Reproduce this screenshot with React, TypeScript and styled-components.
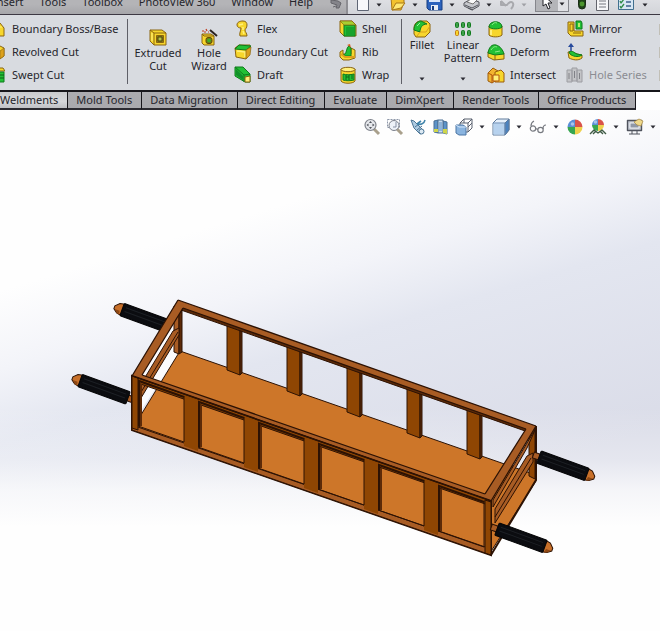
import React from "react";
import styled, { createGlobalStyle, css } from "styled-components";

const GlobalStyle = createGlobalStyle`
  * { box-sizing: border-box; }
  html, body { margin: 0; padding: 0; overflow: hidden; }
  body, button { font-family: "Noto Sans", "Open Sans", sans-serif; font-size: 11px; color: #26262c; }
`;

const Page = styled.div`
  display: flex;
  flex-direction: column;
  min-height: 100vh;
  overflow: hidden;
  background: #fff;
`;

const PlainButton = styled.button`
  display: flex;
  align-items: center;
  flex: none;
  margin: 0;
  padding: 0;
  border: 0;
  background: none;
  line-height: 16px;
  white-space: nowrap;
  cursor: default;
`;

const TopBar = styled.header`
  display: flex;
  align-items: flex-end;
  height: 15px;
  overflow: hidden;
  border-bottom: 1px solid #3c3843;
  background: #d9dbe0;
`;

const MenuBar = styled.nav`
  display: flex;
  flex: none;
  align-items: flex-end;
  gap: 16px;
  height: 24px;
  margin-left: -7px;
  padding: 0 3px 4px 0;
  background: linear-gradient(to bottom, #b4b4b7 60%, #a6a6aa);
  border-right: 2px solid #8e8e93;
`;

const QuickBar = styled.div`
  display: flex;
  flex: 1;
  align-items: flex-end;
  height: 24px;
  padding: 0 8px 2px 8px;
  gap: 8px;
  background: linear-gradient(to bottom, #e6e7ea, #d2d4d9);
`;

const QuickGroup = styled(PlainButton)<{ $active?: boolean; $wide?: boolean }>`
  gap: ${(p) => (p.$wide ? 7 : 6)}px;
  align-items: flex-end;
  ${(p) =>
    p.$active &&
    css`
      background: linear-gradient(to right, #b4b5b9 22px, #e0e1e5 22px);
      border: 1px solid #85868c;
      padding: 0 3px 0 4px;
      gap: 5px;
    `}
`;

const Ribbon = styled.section`
  display: flex;
  height: 77px;
  overflow: hidden;
  border-bottom: 2px solid #17161b;
  background: #d8dbe0;
`;

const RibbonColumn = styled.div<{ $width: number }>`
  display: flex;
  flex: none;
  flex-direction: column;
  gap: 5px;
  width: ${(p) => p.$width}px;
  padding-top: 5px;
`;

const Command = styled(PlainButton)<{ $gap?: number; $disabled?: boolean }>`
  gap: ${(p) => p.$gap ?? 5}px;
  height: 18px;
  color: ${(p) => (p.$disabled ? "#8b8c92" : "#26262c")};
`;

const BigCommand = styled(PlainButton)<{ $width: number; $low?: boolean }>`
  flex-direction: column;
  align-self: flex-start;
  width: ${(p) => p.$width}px;
  height: 72px;
  padding-top: ${(p) => (p.$low ? 13 : 5)}px;
  line-height: 13px;
  text-align: center;
`;

const BigLabel = styled.span`
  white-space: pre-line;
`;

const Push = styled.span`
  display: flex;
  margin-top: auto;
  padding-bottom: 6px;
`;

const Divider = styled.div<{ $after: number }>`
  flex: none;
  width: 1px;
  height: 65px;
  margin: 4px ${(p) => p.$after}px 0 0;
  background: #5f6068;
`;

const Tabs = styled.div`
  display: flex;
  height: 18px;
  overflow: hidden;
`;

const Tab = styled(PlainButton)<{ $active?: boolean }>`
  padding: 0 9px 1px 8px;
  border-right: 1px solid #17161b;
  border-bottom: 2px solid #2b2a30;
  background: ${(p) =>
    p.$active ? "linear-gradient(to bottom, #c9cacd, #d6d7da 60%, #bfc0c4)" : "linear-gradient(to bottom, #acacb0, #a9a9ad)"};
  ${(p) => p.$active && "padding-left: 0;"}
`;

const Viewport = styled.main`
  flex: 1;
  background: linear-gradient(
      to bottom,
      rgba(255, 255, 255, 0) 57%,
      rgba(254, 254, 254, 0.3) 67%,
      rgba(254, 254, 254, 0.75) 73%,
      #fefefe 80%
    ),
    linear-gradient(163deg, #fefefe 25%, #f3f4f9 36%, #e3e6f0 46%, #dadce8 72%);
`;

const ViewTools = styled.div`
  display: flex;
  justify-content: flex-end;
  align-items: center;
  height: 34px;
  padding-right: 4px;
`;

const ViewTool = styled(PlainButton)<{ $after: number }>`
  gap: 6px;
  margin-right: ${(p) => p.$after}px;
`;

const Drawing = styled.svg`
  display: block;
  width: 100%;
  height: auto;
`;

const IconSvg = styled.svg`
  display: block;
  flex: none;
`;

/* ---------- icons ---------- */

const Y = "#f7d62c";
const YD = "#dca11c";
const YL = "#fff07c";
const G = "#22c035";
const GD = "#0f7a1c";
const BR = "#8a6410";

type Draw = { children: React.ReactNode; w?: number; h?: number };
const Icon = ({ children, w = 18, h = 18 }: Draw) => (
  <IconSvg width={w} height={h} viewBox={`0 0 ${w} ${h}`} strokeLinejoin="round" aria-hidden="true">
    {children}
  </IconSvg>
);

const Caret = ({ color = "#2c2c34" }: { color?: string }) => (
  <Icon w={6} h={4}>
    <path d="M0.5 0.5h5L3 3.5z" fill={color} />
  </Icon>
);

const QuickCaret = ({ color }: { color?: string }) => (
  <Icon w={6} h={12}>
    <path d="M0.5 3.5h5L3 6.5z" fill={color ?? "#25252b"} />
  </Icon>
);

const BoundaryBossIcon = () => (
  <Icon w={5}>
    <path d="M-6 6L0 3l4 5v8h-10z" fill={Y} stroke={BR} />
    <path d="M-4 7h6" stroke={YL} />
  </Icon>
);
const RevolvedCutIcon = () => (
  <Icon w={5}>
    <path d="M-6 5L0 3l4 2v8l-6 4z" fill={Y} stroke={BR} />
    <path d="M0 8l4-3v8l-4 3z" fill={YD} stroke={BR} strokeWidth=".6" />
  </Icon>
);
const SweptCutIcon = () => (
  <Icon w={5}>
    <path d="M-3 2h6l2 3h-8z" fill={Y} stroke={BR} />
    <path d="M-3 6h7v10h-7z" fill={G} stroke={GD} />
    <path d="M-2 9h6M-2 12h6" stroke="#0a6315" />
  </Icon>
);
const ExtrudedCutIcon = () => (
  <Icon>
    <path d="M1 2h12l4 3v12H5l-4-4z" fill={Y} stroke={BR} />
    <path d="M1 2l4 3h12M5 5v12" fill="none" stroke={BR} />
    <path d="M3 5v8" fill="none" stroke={YL} />
    <rect x="7.500" y="7.500" width="7" height="7" fill="#8a7a14" stroke={BR} />
    <path d="M9 9h4v4H9z" fill="#b7c046" stroke="#4c450c" />
  </Icon>
);
const HoleWizardIcon = () => (
  <Icon>
    <path d="M2 6h9l3 2v9H4l-2-2z" fill={Y} stroke={BR} />
    <path d="M2 6l2 2h10" fill="none" stroke={BR} />
    <rect x="6" y="9.500" width="6" height="6" rx="2" fill="#6f7b15" stroke="#5e4b0a" />
    <circle cx="9" cy="12.500" r="1.800" fill="#3fae2b" />
    <path d="M10 2l7 6" stroke="#2b2320" strokeWidth="2" />
    <path d="M2 3h2M6 1l1 2M4 4h2M8 4h1" stroke="#bf3a1d" strokeWidth="1.200" />
  </Icon>
);
const FlexIcon = () => (
  <Icon>
    <path d="M3 5c0-3 3-4 6-4 3 0 4 2 4 4 0 3-2 4-2 5 0 2 2 3 2 6H6c-1-3 1-5 1-8-2 0-4-1-4-3z" fill={Y} stroke={BR} />
    <path d="M5 5l4-1M9 7v3M9 11l1 3" stroke={YL} strokeWidth="1.500" fill="none" />
  </Icon>
);
const BoundaryCutIcon = () => (
  <Icon>
    <path d="M1 5l4-3h11l-1 9-3 5-10-2z" fill={Y} stroke={BR} />
    <path d="M1 6l4-4 12 1-5 4z" fill={G} stroke={GD} />
    <path d="M3 8l8 1v5" fill="none" stroke={YL} strokeWidth="1.500" />
    <path d="M12 7l5-3-1 8-4 4z" fill={YD} stroke={BR} strokeWidth=".7" />
  </Icon>
);
const DraftIcon = () => (
  <Icon>
    <path d="M1 1h8l7 7v8h-5L1 10z" fill={G} stroke={GD} />
    <path d="M1 1l9 8v7M10 9l6-1" fill="none" stroke={GD} />
    <path d="M2 3l7 7v4L2 9z" fill="#12902a" />
    <path d="M11 11l5-1v6h-5z" fill={YL} stroke={BR} />
  </Icon>
);
const ShellIcon = () => (
  <Icon>
    <path d="M1 1h12l4 4v11H5l-4-4z" fill={Y} stroke={BR} />
    <path d="M5 5h11v11H5z" fill={G} stroke={GD} />
    <path d="M7 7h8v8H7z" fill="#18a32c" />
    <path d="M1 1h12l4 4H5z" fill="#a8cf30" stroke={BR} strokeWidth=".7" />
  </Icon>
);
const RibIcon = () => (
  <Icon>
    <path d="M1 9l3-2v4h8V5l4 2v8l-6 2H4l-3-3z" fill={Y} stroke={BR} />
    <path d="M4 12c4 0 3-8 6-9l2 2v8H6z" fill={G} stroke={GD} />
    <path d="M10 3l-2-1 3-1 1 4" fill="#d65a1d" />
    <path d="M2 11l4 3h10" fill="none" stroke={YD} strokeWidth="2" />
  </Icon>
);
const WrapIcon = () => (
  <Icon>
    <path d="M2 3v12c2 3 12 3 14 0V3z" fill={Y} stroke={BR} />
    <ellipse cx="9" cy="3.500" rx="7" ry="2.200" fill={YL} stroke={BR} />
    <path d="M4 8c3 1 7 1 11 0v6c-4 1-8 1-11 0z" fill={G} stroke={GD} />
    <path d="M7 9v5M10 9v5M13 9v4M7 11h3" stroke="#0c6918" />
  </Icon>
);
const FilletIcon = () => (
  <Icon>
    <path d="M1 8c0-4 3-7 7-7h6l3 3v8l-5 5H3l-2-3z" fill={Y} stroke={BR} />
    <path d="M1 10c0-5 3-9 7-9l6 3c-5 0-7 4-7 8z" fill={G} stroke={GD} />
    <path d="M7 12l-3 4M7 12h6l4-6" fill="none" stroke={YD} />
    <path d="M4 6l3-3" stroke="#9df09c" />
  </Icon>
);
const PatternIcon = () => (
  <Icon>
    {[1, 7, 13].map((x) => (
      <g key={x}>
        <rect x={x + 0.5} y="2.500" width="3" height="5" rx="1" fill="#3fa04a" stroke={GD} />
        <rect
          x={x + 0.5}
          y="10.500"
          width="3"
          height="5"
          rx="1"
          fill={x === 1 ? Y : "#3fa04a"}
          stroke={x === 1 ? "#c27a12" : GD}
        />
      </g>
    ))}
  </Icon>
);
const DomeIcon = () => (
  <Icon>
    <path d="M2 6v9c2 2.500 11 2.500 13 0V6z" fill={Y} stroke={BR} />
    <path d="M2 7c0-7 13-7 13 0-2 2.500-11 2.500-13 0z" fill={G} stroke={GD} />
    <path d="M5 5c1-2 3-3 5-2" stroke="#8df08b" fill="none" />
    <path d="M4 10v5" stroke={YL} strokeWidth="2" />
  </Icon>
);
const DeformIcon = () => (
  <Icon>
    <path d="M1 9l4-5 9 2 3 5v5l-10 1-6-3z" fill={Y} stroke={BR} />
    <path d="M1 10c1-6 4-9 8-8s7 5 8 9l-9 1z" fill={G} stroke={GD} />
    <path d="M4 7c2-3 4-4 6-3M8 9l5-1" fill="none" stroke="#8be987" />
    <path d="M8 12v5" stroke={BR} />
  </Icon>
);
const IntersectIcon = () => (
  <Icon>
    <path d="M1 7l5-5 5 3v8l-6 4-4-2z" fill="#f2b431" stroke="#9a5c0d" />
    <path d="M8 6l6-2 3 3v9H8z" fill={Y} stroke="#9a5c0d" />
    <path d="M6 9h6v6H6z" fill={YL} stroke="#b3550e" />
    <path d="M1 7l4 2v8" fill="none" stroke="#b3550e" />
  </Icon>
);
const MirrorIcon = () => (
  <Icon>
    <path d="M2 2h6v9h9v5H5l-3-3z" fill={Y} stroke={BR} />
    <path d="M10 1h5l1 2v6h-6z" fill={G} stroke={GD} />
    <path d="M4 4h3v7H4zM7 13h8" fill="none" stroke={BR} />
    <path d="M12 3h2v4h-2z" fill="#b4e96a" />
  </Icon>
);
const FreeformIcon = () => (
  <Icon>
    <path d="M2 9c4-1 6 1 9 2l5 1v3c-4 3-9 2-13 0z" fill={Y} stroke={BR} />
    <path d="M3 9c4-2 5 1 8 2l5 1c-4 3-10 1-12-1z" fill={G} stroke={GD} />
    <path d="M5 8V3" stroke="#274a9c" strokeWidth="1.500" />
    <path d="M2 4l3-4 3 4z" fill="#274a9c" />
  </Icon>
);
const HoleSeriesIcon = () => (
  <Icon>
    <g fill="#c3c4c7" stroke="#9c9da2">
      <path d="M1 4h5v12H1zM6 2h5v13H6zM11 4h5v12h-5z" />
      <path d="M3 7v6M8.500 5v7M13.500 7v6" fill="none" stroke="#808187" />
    </g>
  </Icon>
);
const CutOffIcon = ({ tone }: { tone: string }) => (
  <Icon w={4}>
    <path d="M2 4h6v11H2z" fill={tone} stroke="#aaa38d" />
  </Icon>
);

const PinIcon = () => (
  <Icon w={14} h={12}>
    <path d="M2 2l7 1 3 2-2 5-3 0 1-3-6-2z" fill="#84848a" stroke="#65656b" />
    <path d="M4 9l3-1" stroke="#65656b" />
  </Icon>
);
const NewIcon = () => (
  <Icon w={14} h={12}>
    <path d="M1.500-3h11v13.500h-11z" fill="#f7f8fb" stroke="#5f6675" />
  </Icon>
);
const OpenIcon = () => (
  <Icon w={16} h={12}>
    <path d="M1-3h7l6 3v3l-3 7H2z" fill="#f3c22e" stroke="#a9791a" />
    <path d="M2 10l4-7h9l-4 5z" fill="#ffe873" stroke="#a9791a" />
  </Icon>
);
const SaveIcon = () => (
  <Icon w={17} h={12}>
    <path d="M1-4h15v14H3l-2-2z" fill="#2c63bd" stroke="#173e82" />
    <path d="M3-3h11v5H3z" fill="#d9e6fa" />
    <path d="M5 5h7v5H5z" fill="#e9edf3" />
    <path d="M6 6h2v4H6z" fill="#173e82" />
  </Icon>
);
const PrintIcon = () => (
  <Icon w={17} h={12}>
    <path d="M1 3l7-4 8 3v4l-7 4-8-4z" fill="#c6c8cd" stroke="#54565d" />
    <path d="M4 2l5-4 5 2-4 4z" fill="#fafafa" stroke="#777" />
    <path d="M2 5l7 3 6-3M5 8l5 2" fill="none" stroke="#54565d" />
  </Icon>
);
const UndoIcon = () => (
  <Icon w={15} h={12}>
    <path d="M1 1l5 5M1 1v4h6C11-1 16 3 11 9" fill="none" stroke="#a8a9ad" strokeWidth="2" />
  </Icon>
);
const CursorIcon = () => (
  <Icon w={14} h={12}>
    <path d="M3-4v11l3-2 2 5 2-1-2-5h4z" fill="#fff" stroke="#232329" />
  </Icon>
);
const LightIcon = () => (
  <Icon w={10} h={12}>
    <rect x="1.500" y="-6" width="7" height="15" rx="3.500" fill="#1f4418" stroke="#1a2c16" />
    <circle cx="5" cy="4" r="2.400" fill="#4c962e" />
  </Icon>
);
const PageIcon = () => (
  <Icon w={15} h={12}>
    <path d="M1.500-3h12v13.500h-12z" fill="#f6f6f8" stroke="#62646c" />
    <path d="M4 1h7M4 4h7M4 7h7" stroke="#74767e" />
  </Icon>
);
const OptionsIcon = () => (
  <Icon w={17} h={12}>
    <path d="M.5-3h15v12.500H.5z" fill="#d6e6f3" stroke="#41708f" />
    <path d="M2 1l1 2 3-4M2 6l1 2 3-4" fill="none" stroke="#2f8d4b" strokeWidth="1.300" />
    <path d="M8 2h5M8 6h5" stroke="#3c638f" strokeWidth="1.500" />
  </Icon>
);

const ZoomFitIcon = () => (
  <Icon>
    <path d="M11 11l5 5" stroke="#a9a08c" strokeWidth="3" />
    <circle cx="7.500" cy="7" r="5.500" fill="#e6e8ec" stroke="#7f838b" strokeWidth="1.200" />
    <path d="M7.500 3l1.500 2h-3zM7.500 11l1.500-2h-3zM3.500 7l2-1.500v3zM11.500 7l-2-1.500v3z" fill="#4f535b" />
  </Icon>
);
const ZoomAreaIcon = () => (
  <Icon>
    <path d="M11 11l5 5" stroke="#a9a08c" strokeWidth="3" />
    <path d="M1.500 1.500h12v8h-12z" fill="none" stroke="#8d97a8" strokeDasharray="2 1" />
    <circle cx="8" cy="7.500" r="5" fill="#eef2f8" stroke="#7b808b" />
    <path d="M10 4v5H7" fill="none" stroke="#8892a6" />
  </Icon>
);
const PreviousViewIcon = () => (
  <Icon>
    <path d="M2 2l3 1 9 9 0 3-3 1-6-6z" fill="#aecbe2" stroke="#4b7595" />
    <path d="M6 9l4-3M8 12l5-4" stroke="#4b7595" />
    <path d="M16 2c-1 4-4 5-8 4M8 6l4-3" fill="none" stroke="#3f83aa" strokeWidth="1.600" />
    <circle cx="12.500" cy="13.500" r="2.500" fill="#dce9f3" stroke="#4b7595" />
  </Icon>
);
const SectionIcon = () => (
  <Icon>
    <path d="M2 3l4-1v13l-4-1zM11 3l4 1v12l-4-1z" fill="#5c93c8" stroke="#4a6f94" />
    <path d="M6 2h5v13H6z" fill="#c9dced" stroke="#4a6f94" />
    <path d="M2 11h4v3l-4 0zM11 11h4v5l-4-1z" fill="#cfd649" />
    <path d="M7 4h3v9H7z" fill="#8eb4da" />
  </Icon>
);
const OrientationIcon = () => (
  <Icon>
    <path d="M5 5l4-4h8v9l-4 4H5z" fill="#fff" stroke="#59606e" />
    <path d="M5 5h8v9M13 5l4-4M9 1v4M13 9l4-4" fill="none" stroke="#59606e" />
    <path d="M1 7h7l3 2v8H4l-3-2z" fill="#8ab4df" stroke="#4c76a5" />
    <path d="M1 7l3 2h7" fill="none" stroke="#d6e8fa" />
  </Icon>
);
const DisplayStyleIcon = () => (
  <Icon>
    <path d="M1 5l4-4h12v11l-4 5H1z" fill="#e6f0fb" stroke="#5e7a9b" />
    <path d="M1.500 5.500h11v11h-11z" fill="#b7d2ee" />
    <path d="M13 5l4-4v11l-4 5z" fill="#4a82c0" stroke="#5e7a9b" />
    <path d="M1 5h12v12" fill="none" stroke="#6689b2" />
  </Icon>
);
const GlassesIcon = () => (
  <Icon>
    <g fill="none" stroke="#777a80" strokeWidth="1.200">
      <circle cx="4" cy="10.500" r="2.700" />
      <circle cx="11.500" cy="12" r="2.700" />
      <path d="M6.500 10.500l2.500 1M2 8c0-3 1-4 3-5M14 11c0-3 1-4 3-4" />
    </g>
  </Icon>
);
const Ball = ({ r = 7.5, cy = 9 }: { r?: number; cy?: number }) => (
  <>
    <path d={`M9 ${cy}V${cy - r}A${r} ${r} 0 0 0 ${9 - r} ${cy}z`} fill="#5b8fd6" />
    <path d={`M9 ${cy}V${cy - r}A${r} ${r} 0 0 1 ${9 + r} ${cy}z`} fill="#d9534a" />
    <path d={`M9 ${cy}H${9 - r}A${r} ${r} 0 0 0 9 ${cy + r}z`} fill="#37a650" />
    <path d={`M9 ${cy}H${9 + r}A${r} ${r} 0 0 1 9 ${cy + r}z`} fill="#efd14c" />
    <circle cx="6.500" cy={cy - 3} r="1.800" fill="#d7e6fb" opacity=".6" />
  </>
);
const AppearanceIcon = () => (
  <Icon>
    <Ball />
  </Icon>
);
const SceneIcon = () => (
  <Icon>
    <Ball r={6} cy={7} />
    <path d="M1 16l4-4 4 3 4-3 4 4M4 16l3-3M11 13l3 3" stroke="#3e5a44" strokeWidth="1.400" fill="none" />
  </Icon>
);
const ViewSettingsIcon = () => (
  <Icon>
    <path d="M1.500 2.500h14v10h-14z" fill="#c4c9d2" stroke="#4f535d" strokeWidth="1.400" />
    <path d="M4 5h9v5H4z" fill="#8f97a6" stroke="#eef0f4" />
    <path d="M8 4l5-3 4 2-2 5-4-1z" fill="#efd98c" stroke="#a58743" strokeWidth=".7" />
    <path d="M6 13v3M11 13v3M3 16h11" stroke="#4f535d" />
  </Icon>
);

/* ---------- 3D model ---------- */

const EDGE = "#2c1204";
const FACE = "#cd7629";
const RAIL = "#a85c24";
const SIDE = "#8f4603";
const DARK = "#5c2a08";

const pts = (list: number[][]) => list.map((p) => p.join(",")).join(" ");

const Poly = ({ p, fill, w = 1 }: { p: number[][]; fill: string; w?: number }) => (
  <polygon points={pts(p)} fill={fill} stroke={EDGE} strokeWidth={w} strokeLinejoin="round" />
);

const Handle = ({ x, y, flip }: { x: number; y: number; flip?: boolean }) => (
  <g transform={`translate(${x} ${y}) rotate(20) ${flip ? "scale(-1 1)" : ""}`}>
    <rect x="-6" y="-3" width="8" height="6" fill={RAIL} stroke={EDGE} />
    <path d="M50 -6l5 1 4 4v3l-4 3-5 1z" fill="#c8702a" stroke={EDGE} />
    <path d="M53 2l5 0-3 3-3 1z" fill="#8d4713" />
    <rect x="0" y="-6.500" width="51" height="13" rx="1" fill="#0b0c10" stroke="#050506" />
    <path d="M3 -3h45M3 1h45" stroke="#1d2025" strokeWidth="1" />
  </g>
);

const bays = [0, 1, 2, 3, 4, 5];
const posts = [0, 1, 2, 3, 4];

const Model = () => (
  <Drawing viewBox="0 144 660 487" role="img" aria-label="Cart frame model">
    <Handle x={170} y={327} flip />
    <Handle x={128} y={398} flip />

    <polygon points={pts([[176, 312], [180, 351], [140, 412], [138, 378]])} fill="#fbfbfd" />
    <Poly p={[[180, 351], [536, 475], [536, 481], [490, 553], [133, 428]]} fill={FACE} />

    <Poly p={[[174, 306], [179, 306], [179, 354], [174, 352]]} fill={RAIL} />
    <Poly p={[[179, 306], [182, 308], [182, 352], [179, 354]]} fill={DARK} />
    <Poly p={[[529, 430], [535, 428], [535, 479], [529, 476]]} fill={SIDE} />

    {posts.map((i) => {
      const x = 227 + 60 * i;
      const y = 325 + 21 * i;
      return (
        <g key={i}>
          <Poly p={[[x, y], [x + 13, y + 4], [x + 13, y + 50], [x, y + 45]]} fill={SIDE} />
          <Poly p={[[x + 13, y + 4], [x + 15, y + 5], [x + 15, y + 48], [x + 13, y + 50]]} fill={DARK} />
        </g>
      );
    })}

    <Poly p={[[181, 306], [530, 429], [528, 432], [181, 310]]} fill={DARK} />

    <Poly p={[[173, 331], [179, 328], [179, 335], [141, 398], [138, 398], [138, 389]]} fill={RAIL} />
    <path d="M178 332L138 397" stroke={EDGE} />

    <polygon
      points={pts([[178, 300], [536, 426], [491, 501], [132, 376], [142, 375], [485, 494], [526, 429], [183, 308], [142, 375], [132, 376]])}
      fill={RAIL}
    />
    <Poly p={[[527, 456], [533, 453], [533, 462], [495, 523], [495, 509]]} fill={RAIL} />
    <path d="M531 458L495 517" stroke={EDGE} />

    <polygon points={pts([[132, 376], [491, 501], [491, 555], [132, 430]])} fill="none" stroke={EDGE} strokeWidth="2" />
    <path d="M132 376L491 501v5L132 381z" fill={SIDE} stroke={EDGE} />
    <path d="M132 425L491 549v6L132 430z" fill={RAIL} stroke={EDGE} />
    <path d="M132 376l6 2v52l-6-2z" fill={SIDE} stroke={EDGE} />
    <path d="M485 500l6 2v53l-6-2z" fill={SIDE} stroke={EDGE} />
    {posts.map((i) => {
      const x = 184 + 60 * i;
      const y = 395 + 21 * i;
      return <path key={i} d={`M${x} ${y}l14 5v51l-14-5z`} fill={SIDE} />;
    })}
    {bays.map((i) => {
      const x = 138 + 60 * i;
      const y = 380 + 21 * i;
      return (
        <g key={i} fill="none">
          <path d={`M${x + 1} ${y + 46}v-45l45 16`} stroke={EDGE} strokeWidth="2" />
          <path d={`M${x + 46} ${y + 16}v46l-46-16`} stroke={EDGE} />
          <path d={`M${x + 3} ${y + 4}v42`} stroke={DARK} strokeWidth="2" />
        </g>
      );
    })}

    <path d="M536 428L493 500v7L527 448z" fill={RAIL} stroke={EDGE} />
    <path d="M178 300L536 426M183 308L526 429M132 376L491 501M142 375L485 494M178 300L132 376M183 308L142 375M536 426L491 501M526 429L485 494" stroke={EDGE} strokeWidth="1.300" fill="none" />
    <path d="M536 426v54L491 555" stroke={EDGE} strokeWidth="2" fill="none" />

    <Handle x={539} y={457} />
    <Handle x={497} y={529} />
  </Drawing>
);

/* ---------- page ---------- */

const Cmd = ({ icon, label, disabled, gap }: { icon: React.ReactNode; label: string; disabled?: boolean; gap?: number }) => (
  <Command type="button" disabled={disabled} $disabled={disabled} $gap={gap}>
    {icon}
    {label}
  </Command>
);

const menus = ["Insert", "Tools", "Toolbox", "PhotoView 360", "Window", "Help"];
const tabs = ["Weldments", "Mold Tools", "Data Migration", "Direct Editing", "Evaluate", "DimXpert", "Render Tools", "Office Products"];

export default function App() {
  return (
    <Page>
      <GlobalStyle />
      <TopBar>
        <MenuBar>
          {menus.map((m) => (
            <PlainButton type="button" key={m}>{m}</PlainButton>
          ))}
          <PlainButton type="button" aria-label="Pin menu"><PinIcon /></PlainButton>
        </MenuBar>
        <QuickBar>
          <QuickGroup type="button" aria-label="New"><NewIcon /><QuickCaret /></QuickGroup>
          <QuickGroup type="button" aria-label="Open"><OpenIcon /><QuickCaret /></QuickGroup>
          <QuickGroup type="button" aria-label="Save"><SaveIcon /><QuickCaret /></QuickGroup>
          <QuickGroup type="button" aria-label="Print"><PrintIcon /><QuickCaret /></QuickGroup>
          <QuickGroup type="button" aria-label="Undo"><UndoIcon /><QuickCaret color="#a0a1a6" /></QuickGroup>
          <QuickGroup type="button" aria-label="Select" $active><CursorIcon /><QuickCaret /></QuickGroup>
          <QuickGroup type="button" aria-label="Rebuild"><LightIcon /></QuickGroup>
          <QuickGroup type="button" aria-label="File properties"><PageIcon /></QuickGroup>
          <QuickGroup type="button" aria-label="Options" $wide><OptionsIcon /><QuickCaret /></QuickGroup>
        </QuickBar>
      </TopBar>

      <Ribbon>
        <RibbonColumn $width={127}>
          <Cmd gap={7} icon={<BoundaryBossIcon />} label="Boundary Boss/Base" />
          <Cmd gap={7} icon={<RevolvedCutIcon />} label="Revolved Cut" />
          <Cmd gap={7} icon={<SweptCutIcon />} label="Swept Cut" />
        </RibbonColumn>
        <Divider $after={4} />
        <BigCommand type="button" $width={52} $low>
          <ExtrudedCutIcon />
          <BigLabel>{"Extruded\nCut"}</BigLabel>
        </BigCommand>
        <BigCommand type="button" $width={50} $low>
          <HoleWizardIcon />
          <BigLabel>{"Hole\nWizard"}</BigLabel>
        </BigCommand>
        <RibbonColumn $width={105}>
          <Cmd icon={<FlexIcon />} label="Flex" />
          <Cmd icon={<BoundaryCutIcon />} label="Boundary Cut" />
          <Cmd icon={<DraftIcon />} label="Draft" />
        </RibbonColumn>
        <RibbonColumn $width={62}>
          <Cmd icon={<ShellIcon />} label="Shell" />
          <Cmd icon={<RibIcon />} label="Rib" />
          <Cmd icon={<WrapIcon />} label="Wrap" />
        </RibbonColumn>
        <Divider $after={3} />
        <BigCommand type="button" $width={34}>
          <FilletIcon />
          <BigLabel>Fillet</BigLabel>
          <Push><Caret /></Push>
        </BigCommand>
        <BigCommand type="button" $width={48}>
          <PatternIcon />
          <BigLabel>{"Linear\nPattern"}</BigLabel>
          <Push><Caret /></Push>
        </BigCommand>
        <RibbonColumn $width={79}>
          <Cmd icon={<DomeIcon />} label="Dome" />
          <Cmd icon={<DeformIcon />} label="Deform" />
          <Cmd icon={<IntersectIcon />} label="Intersect" />
        </RibbonColumn>
        <RibbonColumn $width={92}>
          <Cmd icon={<MirrorIcon />} label="Mirror" />
          <Cmd icon={<FreeformIcon />} label="Freeform" />
          <Cmd icon={<HoleSeriesIcon />} label="Hole Series" disabled />
        </RibbonColumn>
        <RibbonColumn $width={4}>
          <Command type="button" aria-label="More"><CutOffIcon tone="#d3d4d6" /></Command>
          <Command type="button" aria-label="More"><CutOffIcon tone="#d3d4d6" /></Command>
          <Command type="button" aria-label="More"><CutOffIcon tone="#e2b54a" /></Command>
        </RibbonColumn>
      </Ribbon>

      <Tabs role="tablist">
        {tabs.map((t, i) => (
          <Tab type="button" role="tab" aria-selected={i === 0} $active={i === 0} key={t}>{t}</Tab>
        ))}
      </Tabs>

      <Viewport>
        <ViewTools>
          <ViewTool type="button" aria-label="Zoom to fit" $after={5}><ZoomFitIcon /></ViewTool>
          <ViewTool type="button" aria-label="Zoom to area" $after={5}><ZoomAreaIcon /></ViewTool>
          <ViewTool type="button" aria-label="Previous view" $after={5}><PreviousViewIcon /></ViewTool>
          <ViewTool type="button" aria-label="Section view" $after={5}><SectionIcon /></ViewTool>
          <ViewTool type="button" aria-label="View orientation" $after={7}><OrientationIcon /><Caret /></ViewTool>
          <ViewTool type="button" aria-label="Display style" $after={7}><DisplayStyleIcon /><Caret /></ViewTool>
          <ViewTool type="button" aria-label="Hide or show items" $after={7}><GlassesIcon /><Caret /></ViewTool>
          <ViewTool type="button" aria-label="Edit appearance" $after={5}><AppearanceIcon /></ViewTool>
          <ViewTool type="button" aria-label="Apply scene" $after={7}><SceneIcon /><Caret /></ViewTool>
          <ViewTool type="button" aria-label="View settings" $after={0}><ViewSettingsIcon /><Caret /></ViewTool>
        </ViewTools>
        <Model />
      </Viewport>
    </Page>
  );
}
